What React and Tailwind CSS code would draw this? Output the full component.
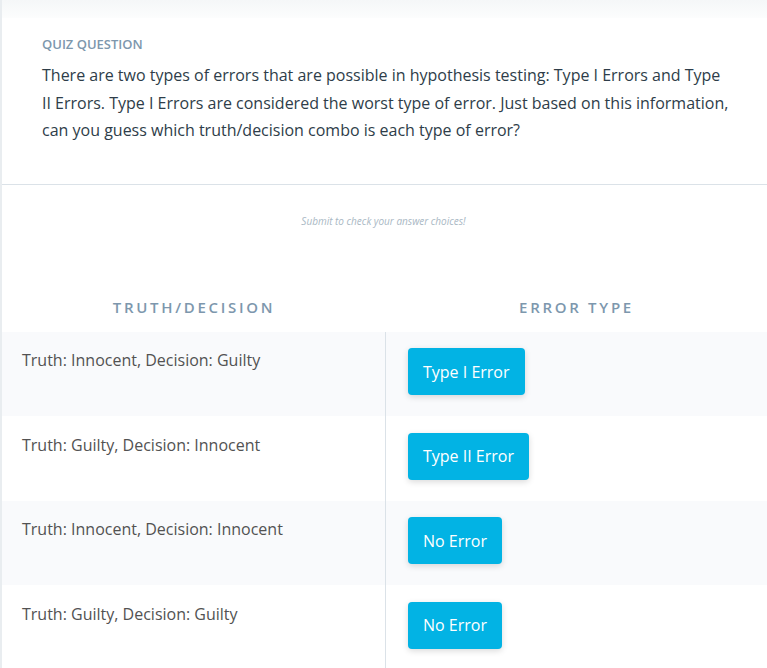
export default function App() {
  const rows = [
    { t: "Truth: Innocent, Decision: Guilty", b: "Type I Error", gray: true },
    { t: "Truth: Guilty, Decision: Innocent", b: "Type II Error", gray: false },
    { t: "Truth: Innocent, Decision: Innocent", b: "No Error", gray: true },
    { t: "Truth: Guilty, Decision: Guilty", b: "No Error", gray: false },
  ];
  return (
    <div className="w-[767px] h-[668px] overflow-hidden bg-white font-['Open_Sans',sans-serif] border-l-2 border-[#e9edf0]">
      <div className="h-[18px] bg-gradient-to-b from-[#f5f7f8] to-[#fcfdfd]" />
      <div className="pl-[40px] pr-[37px] pt-[17px] pb-[39px] border-b border-[#dbe2e8]">
        <div className="text-[13px] font-semibold uppercase text-[#7d97ad] leading-[18px]">Quiz Question</div>
        <p className="mt-[9px] text-[16px] leading-[27.5px] text-[#2e3d49]">
          There are two types of errors that are possible in hypothesis testing: Type I Errors and Type II Errors. Type I Errors are considered the worst type of error. Just based on this information, can you guess which truth/decision combo is each type of error?
        </p>
      </div>
      <div className="pt-[29px] text-center text-[10px] italic text-[#a9b8c4] leading-[14px] pr-[2px]">
        Submit to check your answer choices!
      </div>
      <div className="mt-[68px] flex h-[24px] items-center text-[15px] font-semibold uppercase tracking-[2.7px] text-[#7d97ad]">
        <div className="w-[384px] text-center">Truth/Decision</div>
        <div className="flex-1 text-center">Error Type</div>
      </div>
      <div className="mt-[12px]">
        {rows.map((r, i) => (
          <div key={i} className={`flex h-[84.5px] ${r.gray ? "bg-[#f9fafc]" : "bg-white"}`}>
            <div className="w-[384px] border-r border-[#dbe2e8] pl-[20px] pt-[16.5px] text-[16px] leading-[24px] text-[#525252]">
              {r.t}
            </div>
            <div className="flex-1 pl-[22px] pt-[16.5px]">
              <button className="h-[47px] rounded-[4px] bg-[#02b3e4] px-[15px] text-[16px] text-white shadow-[0_2px_6px_rgba(0,0,0,0.15)]">
                {r.b}
              </button>
            </div>
          </div>
        ))}
      </div>
    </div>
  );
}
